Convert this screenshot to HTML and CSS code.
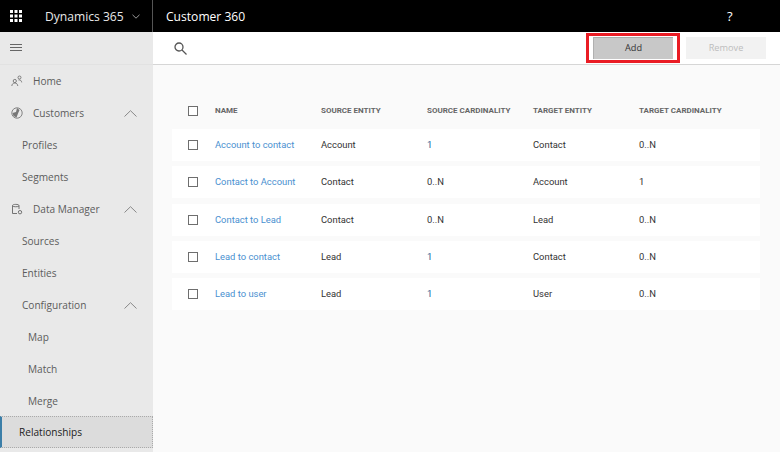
FILE: index.html
```html
<!DOCTYPE html>
<html lang="en">
<head>
<meta charset="utf-8">
<title>Customer 360</title>
<link rel="stylesheet" href="styles.css">
</head>
<body>
<header class="topbar">
  <div class="brand">
    <svg class="waffle" width="12" height="12" viewBox="0 0 12 12"><g fill="#fff"><rect width="3" height="3"/><rect x="4.5" width="3" height="3"/><rect x="9" width="3" height="3"/><rect y="4.5" width="3" height="3"/><rect x="4.5" y="4.5" width="3" height="3"/><rect x="9" y="4.5" width="3" height="3"/><rect y="9" width="3" height="3"/><rect x="4.5" y="9" width="3" height="3"/><rect x="9" y="9" width="3" height="3"/></g></svg>
    <span class="brand-name">Dynamics 365</span>
    <svg class="brand-caret" width="8" height="5" viewBox="0 0 8 5"><path d="M.5.8 4 4.200 7.500.8" fill="none" stroke="#999"/></svg>
  </div>
  <div class="app-name">Customer 360</div>
  <div class="help">?</div>
</header>
<div class="shell">
  <nav class="sidebar">
    <div class="nav-burger">
      <svg width="12" height="8" viewBox="0 0 12 8"><path d="M0 .5h12M0 3.500h12M0 6.500h12" stroke="#666" fill="none"/></svg>
    </div>
    <div class="nav-item top">
      <svg class="nav-icon" width="12" height="12" viewBox="0 0 12 12"><g fill="none" stroke="#666" stroke-width=".8"><circle cx="3.800" cy="6" r="1.600"/><path d="M.8 11c.2-1.900 1.300-3 3-3s2.800 1.100 3 3"/><circle cx="8.500" cy="2.500" r="1.500"/><path d="M7.500 5c1.800-.4 3 .6 3.200 2.400"/></g></svg>
      <span>Home</span>
    </div>
    <div class="nav-item top">
      <svg class="nav-icon" width="12" height="12" viewBox="0 0 12 12"><circle cx="6" cy="6" r="5.200" fill="none" stroke="#777" stroke-width=".9"/><path d="M1.500 6 5 5 6 1 8.500 3 7 6.500 5.500 10.500 2.500 9z" fill="#777"/></svg>
      <span>Customers</span>
      <svg class="chev" width="13" height="7" viewBox="0 0 13 7"><path d="M.5 6.500 6.500.7l6 5.800" fill="none" stroke="#888"/></svg>
    </div>
    <div class="nav-item sub">Profiles</div>
    <div class="nav-item sub">Segments</div>
    <div class="nav-item top">
      <svg class="nav-icon" width="12" height="12" viewBox="0 0 12 12"><g fill="none" stroke="#666" stroke-width=".9"><path d="M6 10.500H1.500V2.500C1.500 1 8 1 8 2.500V6"/><path d="M1.500 3c1 1 5.500 1 6.500 0"/><circle cx="9" cy="9.200" r="1.700"/></g></svg>
      <span>Data Manager</span>
      <svg class="chev" width="13" height="7" viewBox="0 0 13 7"><path d="M.5 6.500 6.500.7l6 5.800" fill="none" stroke="#888"/></svg>
    </div>
    <div class="nav-item sub">Sources</div>
    <div class="nav-item sub">Entities</div>
    <div class="nav-item sub">
      <span>Configuration</span>
      <svg class="chev" width="13" height="7" viewBox="0 0 13 7"><path d="M.5 6.500 6.500.7l6 5.800" fill="none" stroke="#888"/></svg>
    </div>
    <div class="nav-item subsub">Map</div>
    <div class="nav-item subsub">Match</div>
    <div class="nav-item subsub">Merge</div>
    <div class="nav-item active">Relationships</div>
  </nav>
  <main class="content">
    <div class="toolbar">
      <svg class="search" width="13" height="13" viewBox="0 0 13 13"><g fill="none" stroke="#555" stroke-width="1.300"><circle cx="5" cy="5" r="4"/><path d="m8 8 4.500 4.500"/></g></svg>
      <div class="actions">
        <div class="add-frame"><button class="btn btn-add">Add</button></div>
        <button class="btn btn-remove">Remove</button>
      </div>
    </div>
    <div class="table">
      <div class="row head">
        <span class="check"></span>
        <span>NAME</span><span>SOURCE ENTITY</span><span>SOURCE CARDINALITY</span><span>TARGET ENTITY</span><span>TARGET CARDINALITY</span>
      </div>
      <div class="row">
        <span class="check"></span>
        <a class="link">Account to contact</a><span>Account</span><span class="num">1</span><span>Contact</span><span>0..N</span>
      </div>
      <div class="row">
        <span class="check"></span>
        <a class="link">Contact to Account</a><span>Contact</span><span>0..N</span><span>Account</span><span>1</span>
      </div>
      <div class="row">
        <span class="check"></span>
        <a class="link">Contact to Lead</a><span>Contact</span><span>0..N</span><span>Lead</span><span>0..N</span>
      </div>
      <div class="row">
        <span class="check"></span>
        <a class="link">Lead to contact</a><span>Lead</span><span class="num">1</span><span>Contact</span><span>0..N</span>
      </div>
      <div class="row">
        <span class="check"></span>
        <a class="link">Lead to user</a><span>Lead</span><span class="num">1</span><span>User</span><span>0..N</span>
      </div>
    </div>
  </main>
</div>
</body>
</html>
```
FILE: styles.css
```css
* { box-sizing: border-box; }
html, body { margin: 0; height: 100%; overflow: hidden; }
body { font-family: "Open Sans", "Noto Sans", sans-serif; background: #fafafa; }

.topbar { height: 32px; background: #000; color: #fff; display: flex; align-items: center; }
.brand { width: 153px; height: 32px; display: flex; align-items: center; border-right: 1px solid #555; }
.waffle { margin-left: 10px; }
.brand-name { margin-left: 23px; font-size: 12.100px; color: #e8e8e8; }
.brand-caret { margin-left: 8px; }
.app-name { margin-left: 13px; font-size: 12.100px; }
.help { margin-left: auto; margin-right: 43px; font-size: 13px; width: 10px; }

.shell { display: flex; height: 420px; }

.sidebar { width: 153px; flex: none; background: #e9e9e9; font-size: 10.100px; color: #5c5c5c; }
.nav-burger { height: 33px; display: flex; align-items: center; padding-left: 10px; border-bottom: 1px solid #e2e2e2; }
.nav-item { height: 32px; display: flex; align-items: center; }
.nav-item.top { padding-left: 11px; }
.nav-icon { flex: none; margin-right: 10px; }
.nav-item.sub { padding-left: 22px; }
.nav-item.subsub { padding-left: 28px; }
.chev { margin-left: auto; margin-right: 16px; }
.nav-item.active {
  margin-top: -1px;
  padding-left: 17px;
  color: #222;
  background: #dcdcdc;
  border: 1px dotted #aaa;
  border-left: 2px solid #3b7ea8;
}

.content { flex: 1; min-width: 0; }
.toolbar { height: 33px; background: #fff; border-bottom: 1px solid #d6d6d6; display: flex; align-items: center; padding-left: 21px; }
.actions { margin-left: auto; display: flex; align-items: center; gap: 6px; margin-right: 14px; }
.add-frame { border: 3px solid #ea1c24; padding: 1px 3px 0 4px; height: 30px; width: 94px; }
.btn { border: 0; font-family: inherit; font-size: 9.200px; height: 22px; width: 80px; padding: 0 0 2px; display: block; }
.btn-add { background: #c8c8c8; color: #333; border-top: 1px solid #aaa; border-left: 1px solid #b0b0b0; }
.btn-remove { background: #f2f2f2; color: #bdbdbd; }

.table { padding: 30px 20px 0 19px; font-family: Roboto, sans-serif; font-size: 9.400px; color: #333; }
.row {
  height: 32px; margin-bottom: 5.250px; padding-bottom: 1px; background: #fff;
  display: grid; grid-template-columns: 43px 106px 106px 106px 106px 1fr;
  align-items: center;
}
.row.head { background: none; font-size: 8px; font-weight: 700; color: #666; margin-bottom: 2px; }
.check { width: 10px; height: 10px; border: 1px solid #6e6e6e; margin: 1px 0 0 16px; background: #fff; }
.link { color: #4a90d0; }
.num { color: #1f5f96; }
```
